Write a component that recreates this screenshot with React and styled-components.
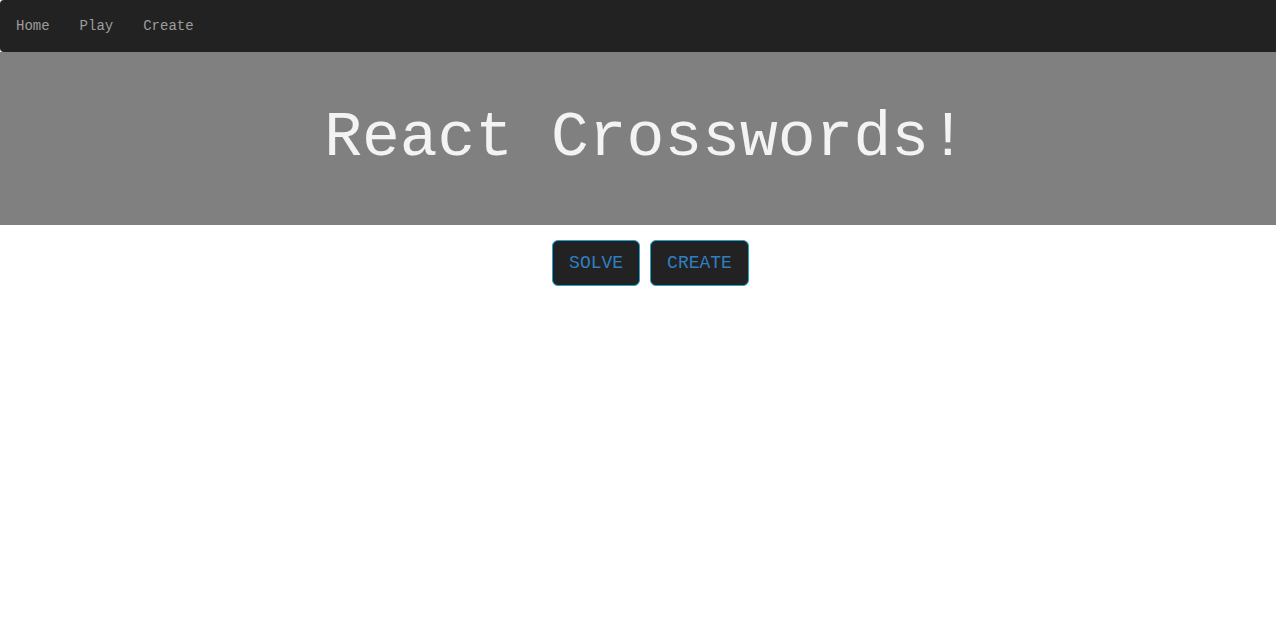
import React from "react";
import styled, { createGlobalStyle } from "styled-components";

const Global = createGlobalStyle`
  html, body { margin: 0; padding: 0; background: #fff; }
  body { font-family: "Liberation Mono", "DejaVu Sans Mono", monospace; }
`;

const NavBar = styled.nav`
  display: flex;
  align-items: center;
  height: 52px;
  background: #222;
  border-radius: 4px 0 0 4px;
  padding: 0 0 0 1px;
`;

const NavLink = styled.a`
  font-family: "Liberation Mono", monospace;
  font-size: 14px;
  line-height: 20px;
  color: #9d9d9d;
  padding: 15px 15px;
  text-decoration: none;
  cursor: pointer;
`;

const Jumbo = styled.header`
  background: #808080;
  height: 173px;
  display: flex;
  align-items: center;
  justify-content: center;
`;

const Title = styled.h1`
  margin: 0;
  padding-left: 15px;
  font-family: "Liberation Mono", monospace;
  font-weight: 400;
  font-size: 63px;
  line-height: 1;
  color: #f3f3f3;
`;

const Actions = styled.div`
  display: flex;
  justify-content: center;
  gap: 10px;
  padding-top: 15px;
  padding-left: 25px;
`;

const ActionButton = styled.button`
  height: 46px;
  padding: 0 16px;
  background: #222;
  border: 1px solid #1fa3cf;
  border-radius: 6px;
  color: #2f7fc1;
  font-family: "Liberation Mono", monospace;
  font-size: 18px;
  cursor: pointer;
`;

export default function App() {
  return (
    <>
      <Global />
      <NavBar>
        <NavLink>Home</NavLink>
        <NavLink>Play</NavLink>
        <NavLink>Create</NavLink>
      </NavBar>
      <Jumbo>
        <Title>React Crosswords!</Title>
      </Jumbo>
      <Actions>
        <ActionButton>SOLVE</ActionButton>
        <ActionButton>CREATE</ActionButton>
      </Actions>
    </>
  );
}
